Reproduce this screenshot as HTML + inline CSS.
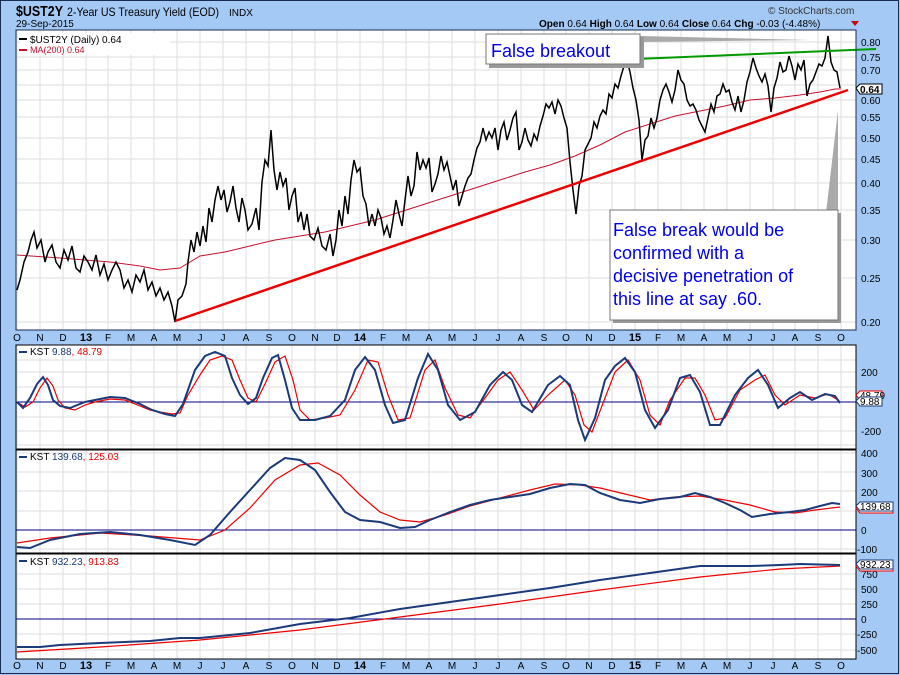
<!DOCTYPE html>
<html><head><meta charset="utf-8"><style>
html,body{margin:0;padding:0;background:#a4c9f4;}
svg{display:block;font-family:"Liberation Sans",Arial,sans-serif;}
</style></head><body>
<svg width="900" height="675" viewBox="0 0 900 675" xmlns="http://www.w3.org/2000/svg">
<rect x="0.5" y="0.5" width="898" height="673" fill="#a4c9f4" stroke="#1a2a50"/>
<text x="16" y="16" font-size="15" font-weight="bold" textLength="47" lengthAdjust="spacingAndGlyphs">$UST2Y</text>
<text x="67" y="16" font-size="12" textLength="152" lengthAdjust="spacingAndGlyphs">2-Year US Treasury Yield (EOD)</text>
<text x="229" y="16" font-size="10">INDX</text>
<text x="16" y="27" font-size="10">29-Sep-2015</text>
<text x="768" y="14" font-size="10" fill="#333">© StockCharts.com</text>
<text x="539" y="27" font-size="10"><tspan font-weight="bold">Open</tspan> 0.64 <tspan font-weight="bold">High</tspan> 0.64 <tspan font-weight="bold">Low</tspan> 0.64 <tspan font-weight="bold">Close</tspan> 0.64 <tspan font-weight="bold">Chg</tspan> -0.03 (-4.48%)</text>
<polygon points="851,21 859,21 855,26" fill="#c00"/>

<rect x="16" y="30" width="840" height="300" fill="#fff"/>
<rect x="16" y="345" width="840" height="104" fill="#fff"/>
<rect x="16" y="450" width="840" height="103" fill="#fff"/>
<rect x="16" y="554" width="840" height="105" fill="#fff"/>

<g stroke="#ddd" stroke-width="1">
<path d="M17 30V330M17 345V659M40 30V330M40 345V659M63 30V330M63 345V659M86 30V330M86 345V659M108 30V330M108 345V659M131 30V330M131 345V659M154 30V330M154 345V659M177 30V330M177 345V659M200 30V330M200 345V659M223 30V330M223 345V659M246 30V330M246 345V659M269 30V330M269 345V659M292 30V330M292 345V659M315 30V330M315 345V659M337 30V330M337 345V659M360 30V330M360 345V659M383 30V330M383 345V659M406 30V330M406 345V659M429 30V330M429 345V659M452 30V330M452 345V659M475 30V330M475 345V659M498 30V330M498 345V659M521 30V330M521 345V659M544 30V330M544 345V659M566 30V330M566 345V659M589 30V330M589 345V659M612 30V330M612 345V659M635 30V330M635 345V659M658 30V330M658 345V659M681 30V330M681 345V659M704 30V330M704 345V659M727 30V330M727 345V659M750 30V330M750 345V659M773 30V330M773 345V659M795 30V330M795 345V659M818 30V330M818 345V659M841 30V330M841 345V659"/>
<path d="M16 42H856M16 57H856M16 70H856M16 85H856M16 100H856M16 117H856M16 138H856M16 159H856M16 183H856M16 210H856M16 240H856M16 278H856M16 322H856"/>
<path d="M16 372H856M16 387H856M16 417H856M16 431H856M16 360H856M16 445H856"/>
<path d="M16 453H856M16 472H856M16 491H856M16 511H856M16 549H856"/>
<path d="M16 574H856M16 589H856M16 604H856M16 634H856M16 650H856"/>
</g>

<polyline fill="none" stroke="#c8102e" stroke-width="1" points="17,255 60,258 110,262 140,266 160,270 180,268 200,256 225,252 250,246 275,240 300,236 325,232 350,226 375,220 400,212 425,204 450,196 475,188 500,180 525,172 550,165 575,156 600,145 625,132 650,124 675,116 700,111 725,106 750,100 775,98 800,95 820,92 835,89 841,89"/>
<polyline fill="none" stroke="#000" stroke-width="1.5" points="17,290 20,280 24,262 28,252 31,240 34,232 37,248 41,240 45,262 48,252 52,245 56,262 60,268 64,250 68,260 72,246 76,268 80,272 84,256 88,262 92,270 96,255 100,275 104,264 108,280 112,270 116,262 120,270 124,288 128,280 132,292 136,275 140,282 144,270 148,290 152,282 156,296 160,288 164,300 168,292 172,306 175,322 178,300 182,296 186,284 188,262 191,240 194,252 197,232 200,246 203,226 206,242 209,208 212,222 215,200 218,186 221,200 224,190 227,212 230,202 233,186 236,208 239,222 242,198 245,210 248,230 252,224 256,208 259,230 262,182 265,160 268,166 271,130 274,170 277,190 280,172 283,186 286,178 289,210 292,196 295,188 298,222 301,212 304,230 307,214 310,236 314,240 318,228 322,246 326,250 330,234 333,256 336,240 339,210 342,226 345,196 348,214 351,180 354,160 357,172 360,168 363,196 366,204 369,226 372,214 375,226 378,210 381,218 384,234 387,226 390,238 393,220 396,200 399,214 402,226 405,200 408,176 411,196 414,186 417,152 420,170 423,160 426,168 429,158 432,192 435,184 438,174 441,156 444,170 447,162 450,176 453,190 456,180 459,206 462,196 465,186 468,178 471,174 474,160 477,148 480,142 483,128 486,140 489,132 492,138 495,128 498,150 501,130 504,122 507,140 510,130 513,118 516,112 519,150 522,142 525,128 528,140 531,146 534,134 537,140 540,126 543,116 546,104 549,108 552,102 555,114 558,100 561,106 564,118 567,128 570,162 573,190 576,214 579,186 582,176 585,150 588,144 591,138 594,122 597,128 600,116 603,110 606,114 609,94 612,98 615,84 618,88 621,76 624,66 627,60 630,72 633,88 636,100 639,120 642,160 645,140 648,136 651,118 654,128 657,118 660,100 663,90 666,84 669,92 672,102 675,90 678,70 681,80 684,84 687,100 690,106 693,104 696,110 699,120 702,126 705,132 708,118 711,104 714,112 717,96 720,94 723,84 726,92 729,90 732,102 735,110 738,96 741,112 744,100 747,82 750,72 753,58 756,68 759,76 762,82 765,74 768,86 771,112 774,88 777,78 780,62 783,72 786,70 789,56 792,66 795,80 798,64 801,70 804,60 807,96 810,84 813,80 816,72 819,64 822,66 825,58 828,36 831,62 834,70 837,72 840,88"/>
<line x1="175" y1="321" x2="848" y2="90" stroke="#e00" stroke-width="2.5"/>
<line x1="636" y1="59" x2="876" y2="49" stroke="#090" stroke-width="2"/>
<polygon points="640,36 810,40 640,42" fill="#aaa"/>
<polygon points="826,213 838,110 838,214" fill="#aaa"/>
<rect x="489" y="37" width="155" height="31" fill="#999"/>
<rect x="486" y="34" width="154" height="30" fill="#fff" stroke="#777"/>
<text x="491" y="57" font-size="18" fill="#0000ee">False breakout</text>
<rect x="613" y="213" width="228" height="110" fill="#999"/>
<rect x="610" y="210" width="228" height="110" fill="#fff" stroke="#777"/>
<g font-size="18" fill="#0000ee">
<text x="613" y="236">False break would be</text>
<text x="613" y="259">confirmed with a</text>
<text x="613" y="282">decisive penetration of</text>
<text x="613" y="305">this line at say .60.</text>
</g>
<rect x="20" y="33" width="150" height="22" fill="#fff"/>
<line x1="19" y1="39" x2="27" y2="39" stroke="#000" stroke-width="2"/>
<text x="30" y="43" font-size="10">$UST2Y (Daily) 0.64</text>
<line x1="19" y1="50" x2="27" y2="50" stroke="#c8102e" stroke-width="2"/>
<text x="30" y="53" font-size="9" fill="#c8102e">MA(200) 0.64</text>
<rect x="16" y="30" width="840" height="300" fill="none" stroke="#1a2a50"/>
<g font-size="10" fill="#000">
<text x="861" y="46">0.80</text><text x="861" y="61">0.75</text><text x="861" y="74">0.70</text>
<text x="861" y="104">0.60</text><text x="861" y="121">0.55</text><text x="861" y="142">0.50</text>
<text x="861" y="163">0.45</text><text x="861" y="187">0.40</text><text x="861" y="214">0.35</text>
<text x="861" y="244">0.30</text><text x="861" y="282">0.25</text><text x="861" y="326">0.20</text>
</g>
<polygon points="856,88 860,84 882,84 882,94 860,94" fill="#fff" stroke="#000"/>
<text x="860" y="93" font-size="10" font-weight="bold">0.64</text>

<g font-size="10" text-anchor="middle" id="m">
<text x="17" y="341">O</text><text x="40" y="341">N</text><text x="63" y="341">D</text><text x="86" y="341" font-weight="bold" font-size="11">13</text><text x="108" y="341">F</text><text x="131" y="341">M</text><text x="154" y="341">A</text><text x="177" y="341">M</text><text x="200" y="341">J</text><text x="223" y="341">J</text><text x="246" y="341">A</text><text x="269" y="341">S</text><text x="292" y="341">O</text><text x="315" y="341">N</text><text x="337" y="341">D</text><text x="360" y="341" font-weight="bold" font-size="11">14</text><text x="383" y="341">F</text><text x="406" y="341">M</text><text x="429" y="341">A</text><text x="452" y="341">M</text><text x="475" y="341">J</text><text x="498" y="341">J</text><text x="521" y="341">A</text><text x="544" y="341">S</text><text x="566" y="341">O</text><text x="589" y="341">N</text><text x="612" y="341">D</text><text x="635" y="341" font-weight="bold" font-size="11">15</text><text x="658" y="341">F</text><text x="681" y="341">M</text><text x="704" y="341">A</text><text x="727" y="341">M</text><text x="750" y="341">J</text><text x="773" y="341">J</text><text x="795" y="341">A</text><text x="818" y="341">S</text><text x="841" y="341">O</text>
</g>
<use href="#m" y="328"/>

<line x1="16" y1="402" x2="856" y2="402" stroke="#000080"/>
<polyline fill="none" stroke="#e00" stroke-width="1.2" points="17,402 25,407 33,402 40,388 47,378 53,386 58,400 65,408 75,410 85,405 95,402 110,399 125,400 135,404 150,410 160,412 172,414 180,413 188,395 200,375 210,360 222,356 232,360 240,380 248,398 256,402 265,384 275,362 285,356 293,380 300,410 310,420 325,418 340,415 355,390 368,360 378,362 388,395 398,420 410,418 425,370 435,360 445,388 458,415 470,418 485,398 498,380 510,372 522,390 534,410 548,395 565,380 575,395 584,425 592,432 605,398 615,372 628,360 640,380 650,415 660,425 670,400 685,378 695,378 705,395 715,420 725,418 740,390 755,380 765,375 775,395 785,405 800,395 815,398 828,394 838,400"/>
<polyline fill="none" stroke="#1a3a7a" stroke-width="2" points="17,402 23,408 30,398 37,384 43,377 48,385 53,400 60,406 70,408 85,402 95,400 110,397 125,398 140,404 152,410 165,414 175,416 183,404 195,370 205,356 215,352 225,356 232,378 240,395 248,404 256,398 263,378 272,358 278,355 285,380 292,408 300,420 315,420 330,416 345,400 355,370 365,357 375,370 385,405 393,423 405,420 418,378 428,354 438,370 448,405 460,420 475,412 490,385 503,372 512,380 522,405 532,412 548,385 560,376 570,385 578,420 585,440 595,418 605,380 615,366 625,358 635,372 645,410 655,428 668,410 680,378 690,375 700,392 710,425 720,425 735,395 748,378 758,370 768,385 778,408 790,398 800,392 812,400 825,394 835,396 840,403"/>
<rect x="16" y="345" width="840" height="104" fill="none" stroke="#000"/>
<line x1="19" y1="352" x2="27" y2="352" stroke="#1a3a7a" stroke-width="2"/>
<text x="30" y="355" font-size="10">KST <tspan fill="#1a3a7a">9.88</tspan><tspan fill="#e00">, 48.79</tspan></text>
<text x="861" y="376" font-size="10">200</text><text x="861" y="435" font-size="10">-200</text>
<polygon points="856,395 860,391 882,391 882,400 860,400" fill="#fff" stroke="#e00"/>
<text x="860" y="399" font-size="10">48.79</text>
<polygon points="856,401 860,397 882,397 882,406 860,406" fill="#fff" stroke="#1a3a7a"/>
<text x="860" y="405" font-size="10">9.88</text>

<line x1="16" y1="530" x2="856" y2="530" stroke="#000080"/>
<polyline fill="none" stroke="#e00" stroke-width="1.2" points="17,543 50,538 100,533 150,536 200,540 225,530 250,508 275,480 300,465 318,463 340,475 360,495 380,512 400,520 420,522 445,515 470,506 500,498 530,490 555,484 580,485 600,488 625,494 650,500 675,497 700,496 725,500 750,505 775,512 795,513 815,510 840,507"/>
<polyline fill="none" stroke="#1a3a7a" stroke-width="2" points="17,547 30,548 50,540 80,534 110,532 140,535 170,540 195,545 210,535 230,512 250,490 270,468 285,458 300,460 315,470 330,492 345,512 360,520 380,522 400,528 415,527 430,520 450,512 470,505 490,500 510,497 530,494 550,488 570,484 585,485 600,493 620,500 640,503 660,499 680,497 695,493 710,497 725,503 740,510 752,517 770,514 790,512 805,510 820,506 832,503 840,504"/>
<rect x="16" y="450" width="840" height="103" fill="none" stroke="#000"/>
<line x1="19" y1="457" x2="27" y2="457" stroke="#1a3a7a" stroke-width="2"/>
<text x="30" y="460" font-size="10">KST <tspan fill="#1a3a7a">139.68</tspan><tspan fill="#e00">, 125.03</tspan></text>
<g font-size="10"><text x="861" y="457">400</text><text x="861" y="477">300</text><text x="861" y="496">200</text><text x="861" y="534">0</text><text x="857" y="553">-100</text></g>
<polygon points="856,508 860,504 893,504 893,513 860,513" fill="#fff" stroke="#e00"/>
<polygon points="856,506 860,502 893,502 893,511 860,511" fill="#fff" stroke="#1a3a7a"/>
<text x="860" y="510" font-size="10">139.68</text>

<line x1="16" y1="619" x2="856" y2="619" stroke="#000080"/>
<polyline fill="none" stroke="#e00" stroke-width="1.2" points="17,652 100,647 200,640 300,630 400,617 500,604 600,590 700,577 780,569 840,566"/>
<polyline fill="none" stroke="#1a3a7a" stroke-width="2" points="17,647 40,647 60,645 100,643 150,641 180,638 200,638 250,633 300,624 350,618 400,609 450,602 500,595 550,588 600,580 650,573 700,566 750,566 780,565 800,564 840,565"/>
<rect x="16" y="554" width="840" height="105" fill="none" stroke="#000"/>
<line x1="19" y1="561" x2="27" y2="561" stroke="#1a3a7a" stroke-width="2"/>
<text x="30" y="565" font-size="10">KST <tspan fill="#1a3a7a">932.23</tspan><tspan fill="#e00">, 913.83</tspan></text>
<g font-size="10"><text x="861" y="578">750</text><text x="861" y="593">500</text><text x="861" y="608">250</text><text x="861" y="623">0</text><text x="857" y="638">-250</text><text x="857" y="654">-500</text></g>
<polygon points="856,566 860,562 893,562 893,571 860,571" fill="#fff" stroke="#e00"/>
<polygon points="856,564 860,560 893,560 893,569 860,569" fill="#fff" stroke="#1a3a7a"/>
<text x="860" y="568" font-size="10">932.23</text>
</svg>
</body></html>
